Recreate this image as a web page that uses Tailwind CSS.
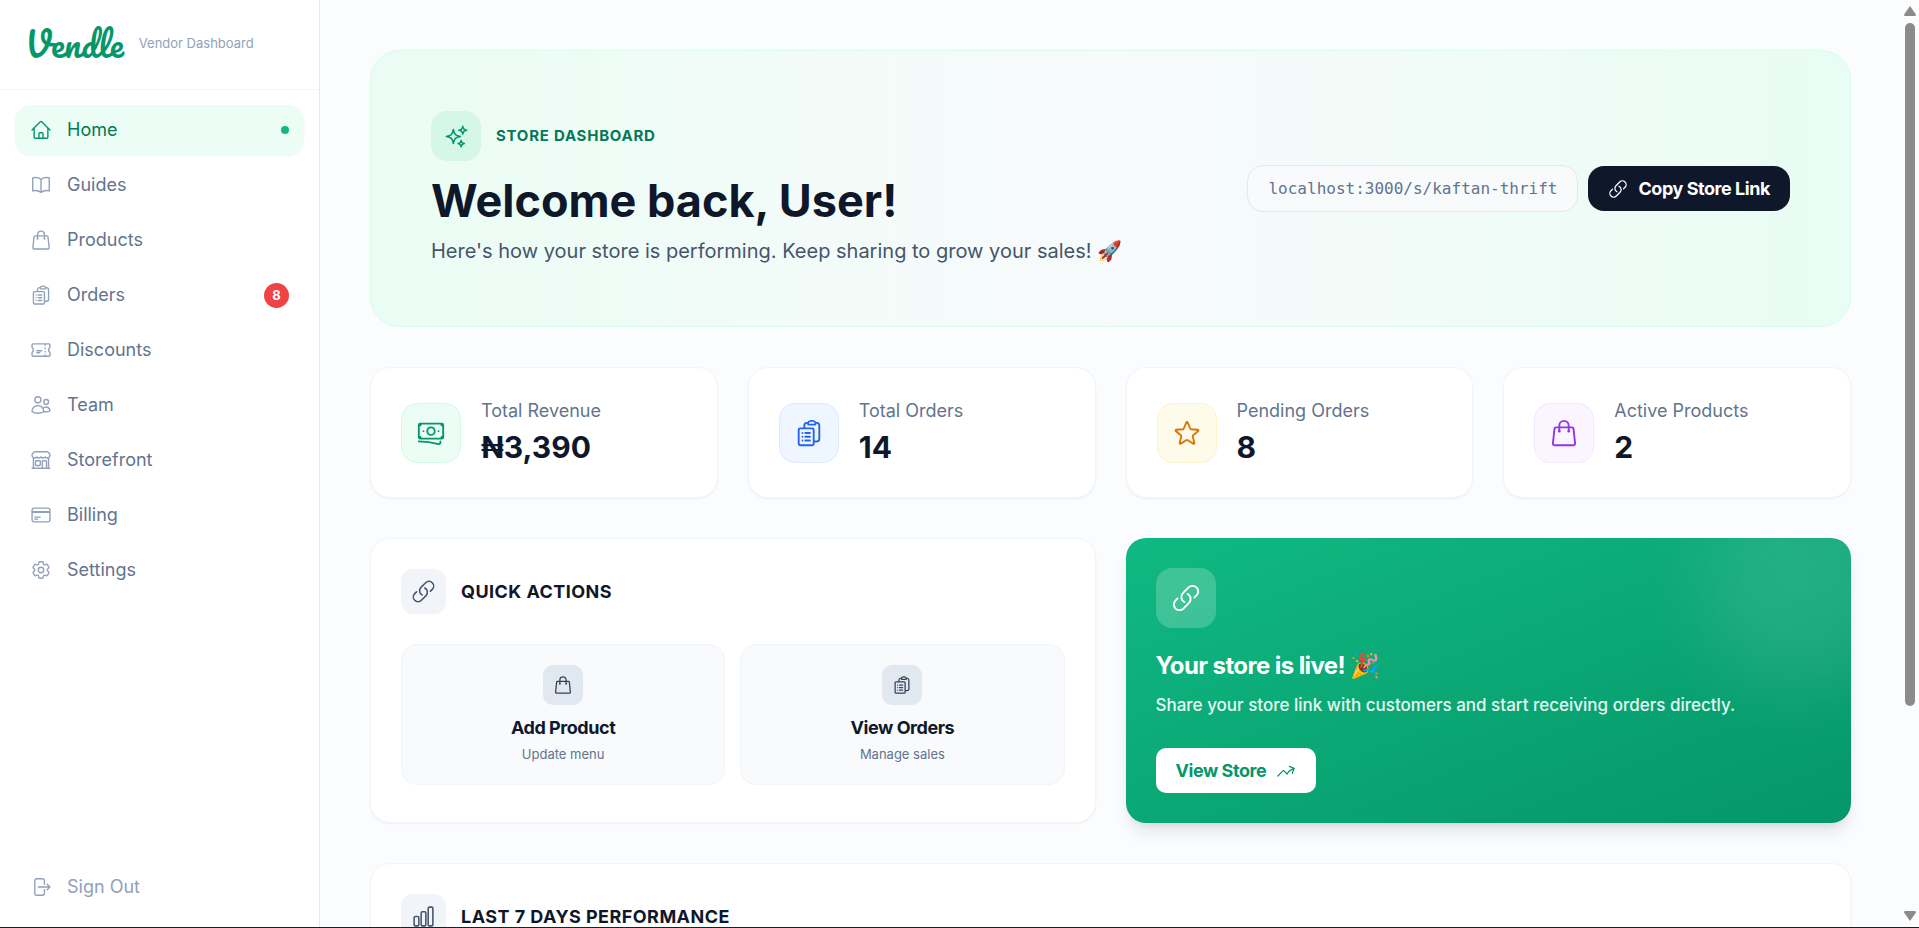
<!DOCTYPE html>
<html lang="en">

<head>
    <meta charset="UTF-8">
    <meta name="viewport" content="width=device-width, initial-scale=1.0">
    <title>Vendle - Vendor Dashboard</title>
    <script src="https://cdn.jsdelivr.net/npm/@tailwindcss/browser@4"></script>
</head>

<body class="flex h-screen overflow-hidden border-b border-[#1b1f2a] bg-[#fbfcfe] font-['Inter',sans-serif] text-slate-900">

    <!-- Icons -->
    <svg class="hidden" fill="none" stroke-linecap="round" stroke-linejoin="round">
        <symbol id="home" viewBox="0 0 24 24"><path d="m2.25 12 8.954-8.955c.44-.439 1.152-.439 1.591 0L21.75 12M4.5 9.75v10.125c0 .621.504 1.125 1.125 1.125H9.75v-4.875c0-.621.504-1.125 1.125-1.125h2.25c.621 0 1.125.504 1.125 1.125V21h4.125c.621 0 1.125-.504 1.125-1.125V9.75M8.25 21h8.25" /></symbol>
        <symbol id="book" viewBox="0 0 24 24"><path d="M12 6.042A8.967 8.967 0 0 0 6 3.75c-1.052 0-2.062.18-3 .512v14.25A8.987 8.987 0 0 1 6 18c2.305 0 4.408.867 6 2.292m0-14.25a8.966 8.966 0 0 1 6-2.292c1.052 0 2.062.18 3 .512v14.25A8.987 8.987 0 0 0 18 18a8.967 8.967 0 0 0-6 2.292m0-14.25v14.25" /></symbol>
        <symbol id="bag" viewBox="0 0 24 24"><path d="M15.75 10.5V6a3.75 3.75 0 1 0-7.5 0v4.5m11.356-1.993 1.263 12c.07.665-.45 1.243-1.119 1.243H4.25a1.125 1.125 0 0 1-1.12-1.243l1.264-12A1.125 1.125 0 0 1 5.513 7.5h12.974c.576 0 1.059.435 1.119 1.007ZM8.625 10.5a.375.375 0 1 1-.75 0 .375.375 0 0 1 .75 0Zm7.5 0a.375.375 0 1 1-.75 0 .375.375 0 0 1 .75 0Z" /></symbol>
        <symbol id="clipboard" viewBox="0 0 24 24"><path d="M9 12h3.75M9 15h3.75M9 18h3.75m3 .75H18a2.25 2.25 0 0 0 2.25-2.25V6.108c0-1.135-.845-2.098-1.976-2.192a48.424 48.424 0 0 0-1.123-.08m-5.801 0c-.065.21-.1.433-.1.664 0 .414.336.75.75.75h4.5a.75.75 0 0 0 .75-.75 2.25 2.25 0 0 0-.1-.664m-5.8 0A2.251 2.251 0 0 1 13.5 2.25H15c1.012 0 1.867.668 2.15 1.586m-5.8 0c-.376.023-.75.05-1.124.08C9.095 4.01 8.25 4.973 8.25 6.108V8.25m0 0H4.875c-.621 0-1.125.504-1.125 1.125v11.25c0 .621.504 1.125 1.125 1.125h9.75c.621 0 1.125-.504 1.125-1.125V9.375c0-.621-.504-1.125-1.125-1.125H8.25ZM6.75 12h.008v.008H6.75V12Zm0 3h.008v.008H6.75V15Zm0 3h.008v.008H6.75V18Z" /></symbol>
        <symbol id="ticket" viewBox="0 0 24 24"><path d="M16.5 6v.75m0 3v.75m0 3v.75m0 3V18m-9-5.25h5.25M7.5 15h3M3.375 5.25c-.621 0-1.125.504-1.125 1.125v3.026a2.999 2.999 0 0 1 0 5.198v3.026c0 .621.504 1.125 1.125 1.125h17.25c.621 0 1.125-.504 1.125-1.125v-3.026a2.999 2.999 0 0 1 0-5.198V6.375c0-.621-.504-1.125-1.125-1.125H3.375Z" /></symbol>
        <symbol id="users" viewBox="0 0 24 24"><path d="M15 19.128a9.38 9.38 0 0 0 2.625.372 9.337 9.337 0 0 0 4.121-.952 4.125 4.125 0 0 0-7.533-2.493M15 19.128v-.003c0-1.113-.285-2.16-.786-3.07M15 19.128v.106A12.318 12.318 0 0 1 8.624 21c-2.331 0-4.512-.645-6.374-1.766l-.001-.109a6.375 6.375 0 0 1 11.964-3.07M12 6.375a3.375 3.375 0 1 1-6.75 0 3.375 3.375 0 0 1 6.75 0Zm8.25 2.25a2.625 2.625 0 1 1-5.25 0 2.625 2.625 0 0 1 5.25 0Z" /></symbol>
        <symbol id="store" viewBox="0 0 24 24"><path d="M13.5 21v-7.5a.75.75 0 0 1 .75-.75h3a.75.75 0 0 1 .75.75V21m-4.5 0H2.36m11.14 0H18m0 0h3.64m-1.39 0V9.349M3.75 21V9.349m0 0a3.001 3.001 0 0 0 3.75-.615A2.993 2.993 0 0 0 9.75 9.75c.896 0 1.7-.393 2.25-1.016a2.993 2.993 0 0 0 2.25 1.016c.896 0 1.7-.393 2.25-1.015a3.001 3.001 0 0 0 3.75.614m-16.5 0a3.004 3.004 0 0 1-.621-4.72l1.189-1.19A1.5 1.5 0 0 1 5.378 3h13.243a1.5 1.5 0 0 1 1.06.44l1.19 1.189a3 3 0 0 1-.621 4.72M6.75 18h3.75a.75.75 0 0 0 .75-.75V13.5a.75.75 0 0 0-.75-.75H6.75a.75.75 0 0 0-.75.75v3.75c0 .414.336.75.75.75Z" /></symbol>
        <symbol id="card" viewBox="0 0 24 24"><path d="M2.25 8.25h19.5M2.25 9h19.5m-16.5 5.25h6m-6 2.25h3m-3.75 3h15a2.25 2.25 0 0 0 2.25-2.25V6.75A2.25 2.25 0 0 0 19.5 4.5h-15a2.25 2.25 0 0 0-2.25 2.25v10.5A2.25 2.25 0 0 0 4.5 19.5Z" /></symbol>
        <symbol id="cog" viewBox="0 0 24 24"><path d="M9.594 3.94c.09-.542.56-.94 1.11-.94h2.593c.55 0 1.02.398 1.11.94l.213 1.281c.063.374.313.686.645.87.074.04.147.083.22.127.325.196.72.257 1.075.124l1.217-.456a1.125 1.125 0 0 1 1.37.49l1.296 2.247a1.125 1.125 0 0 1-.26 1.431l-1.003.827c-.293.241-.438.613-.43.992a7.723 7.723 0 0 1 0 .255c-.008.378.137.75.43.991l1.004.827c.424.35.534.955.26 1.43l-1.298 2.247a1.125 1.125 0 0 1-1.369.491l-1.217-.456c-.355-.133-.75-.072-1.076.124a6.47 6.47 0 0 1-.22.128c-.331.183-.581.495-.644.869l-.213 1.281c-.09.543-.56.94-1.11.94h-2.594c-.55 0-1.019-.398-1.11-.94l-.213-1.281c-.062-.374-.312-.686-.644-.87a6.52 6.52 0 0 1-.22-.127c-.325-.196-.72-.257-1.076-.124l-1.217.456a1.125 1.125 0 0 1-1.369-.49l-1.297-2.247a1.125 1.125 0 0 1 .26-1.431l1.004-.827c.292-.24.437-.613.43-.991a6.932 6.932 0 0 1 0-.255c.007-.38-.138-.751-.43-.992l-1.004-.827a1.125 1.125 0 0 1-.26-1.43l1.297-2.247a1.125 1.125 0 0 1 1.37-.491l1.216.456c.356.133.751.072 1.076-.124.072-.044.146-.086.22-.128.332-.183.582-.495.644-.869l.214-1.28ZM15 12a3 3 0 1 1-6 0 3 3 0 0 1 6 0Z" /></symbol>
        <symbol id="signout" viewBox="0 0 24 24"><path d="M15.75 9V5.25A2.25 2.25 0 0 0 13.5 3h-6a2.25 2.25 0 0 0-2.25 2.25v13.5A2.25 2.25 0 0 0 7.5 21h6a2.25 2.25 0 0 0 2.25-2.25V15m3 0 3-3m0 0-3-3m3 3H9" /></symbol>
        <symbol id="sparkles" viewBox="0 0 24 24"><path d="M9.813 15.904 9 18.75l-.813-2.846a4.5 4.5 0 0 0-3.09-3.09L2.25 12l2.846-.813a4.5 4.5 0 0 0 3.09-3.09L9 5.25l.813 2.846a4.5 4.5 0 0 0 3.09 3.09L15.75 12l-2.846.813a4.5 4.5 0 0 0-3.09 3.09ZM18.259 8.715 18 9.75l-.259-1.035a3.375 3.375 0 0 0-2.455-2.456L14.25 6l1.036-.259a3.375 3.375 0 0 0 2.455-2.456L18 2.25l.259 1.035a3.375 3.375 0 0 0 2.456 2.456L21.75 6l-1.035.259a3.375 3.375 0 0 0-2.456 2.456ZM16.894 20.567 16.5 21.75l-.394-1.183a2.25 2.25 0 0 0-1.423-1.423L13.5 18.75l1.183-.394a2.25 2.25 0 0 0 1.423-1.423l.394-1.183.394 1.183a2.25 2.25 0 0 0 1.423 1.423l1.183.394-1.183.394a2.25 2.25 0 0 0-1.423 1.423Z" /></symbol>
        <symbol id="link" viewBox="0 0 24 24"><path d="M13.19 8.688a4.5 4.5 0 0 1 1.242 7.244l-4.5 4.5a4.5 4.5 0 0 1-6.364-6.364l1.757-1.757m13.35-.622 1.757-1.757a4.5 4.5 0 0 0-6.364-6.364l-4.5 4.5a4.5 4.5 0 0 0 1.242 7.244" /></symbol>
        <symbol id="banknotes" viewBox="0 0 24 24"><path d="M2.25 18.75a60.07 60.07 0 0 1 15.797 2.101c.727.198 1.453-.342 1.453-1.096V18.75M3.75 4.5v.75A.75.75 0 0 1 3 6h-.75m0 0v-.375c0-.621.504-1.125 1.125-1.125H20.25M2.25 6v9m18-10.5v.75c0 .414.336.75.75.75h.75m-1.5-1.5h.375c.621 0 1.125.504 1.125 1.125v9.75c0 .621-.504 1.125-1.125 1.125h-.375m1.5-1.5H21a.75.75 0 0 0-.75.75v.75m0 0H3.75m0 0h-.375a1.125 1.125 0 0 1-1.125-1.125V15m1.5 1.5v-.75A.75.75 0 0 0 3 15h-.75M15 10.5a3 3 0 1 1-6 0 3 3 0 0 1 6 0Zm3 0h.008v.008H18V10.5Zm-12 0h.008v.008H6V10.5Z" /></symbol>
        <symbol id="star" viewBox="0 0 24 24"><path d="M11.48 3.499a.562.562 0 0 1 1.04 0l2.125 5.111a.563.563 0 0 0 .475.345l5.518.442c.499.04.701.663.321.988l-4.204 3.602a.563.563 0 0 0-.182.557l1.285 5.385a.562.562 0 0 1-.84.61l-4.725-2.885a.562.562 0 0 0-.586 0L6.982 20.54a.562.562 0 0 1-.84-.61l1.285-5.386a.562.562 0 0 0-.182-.557l-4.204-3.602a.562.562 0 0 1 .321-.988l5.518-.442a.563.563 0 0 0 .475-.345L11.48 3.5Z" /></symbol>
        <symbol id="trend" viewBox="0 0 24 24"><path d="M2.25 18 9 11.25l4.306 4.306a11.95 11.95 0 0 1 5.814-5.518l2.74-1.22m0 0-5.94-2.281m5.94 2.28-2.28 5.941" /></symbol>
        <symbol id="chart" viewBox="0 0 24 24"><path d="M3 13.125C3 12.504 3.504 12 4.125 12h2.25c.621 0 1.125.504 1.125 1.125v6.75C7.5 20.496 6.996 21 6.375 21h-2.25A1.125 1.125 0 0 1 3 19.875v-6.75ZM9.75 8.625c0-.621.504-1.125 1.125-1.125h2.25c.621 0 1.125.504 1.125 1.125v11.25c0 .621-.504 1.125-1.125 1.125h-2.25a1.125 1.125 0 0 1-1.125-1.125V8.625ZM16.5 4.125c0-.621.504-1.125 1.125-1.125h2.25C20.496 3 21 3.504 21 4.125v15.75c0 .621-.504 1.125-1.125 1.125h-2.25a1.125 1.125 0 0 1-1.125-1.125V4.125Z" /></symbol>
    </svg>

    <!-- Sidebar -->
    <aside class="flex w-80 shrink-0 flex-col border-r border-slate-200 bg-white">
        <div class="flex h-[90px] items-center gap-[15px] border-b border-slate-100 px-[25px] pb-0.5">
            <span class="font-['Pacifico','Liberation_Serif',cursive] text-[34px] leading-10 text-[#059669]">Vendle</span>
            <span class="text-[13px] text-slate-400">Vendor Dashboard</span>
        </div>

        <nav class="flex flex-1 flex-col gap-[5px] p-[15px] text-lg text-slate-500">
            <a href="#" class="flex h-[50px] items-center gap-[15px] rounded-2xl bg-[#ecfdf5] px-[15px] text-[#047857] shadow-xs">
                <svg class="size-[22px] fill-none stroke-[#059669] stroke-[1.5] [stroke-linecap:round] [stroke-linejoin:round]"><use href="#home" /></svg>
                Home
                <span class="ml-auto size-2 rounded-full bg-[#10b981]"></span>
            </a>
            <a href="#" class="flex h-[50px] items-center gap-[15px] rounded-2xl px-[15px]">
                <svg class="size-[22px] fill-none stroke-slate-400 stroke-[1.5] [stroke-linecap:round] [stroke-linejoin:round]"><use href="#book" /></svg>
                Guides
            </a>
            <a href="#" class="flex h-[50px] items-center gap-[15px] rounded-2xl px-[15px]">
                <svg class="size-[22px] fill-none stroke-slate-400 stroke-[1.5] [stroke-linecap:round] [stroke-linejoin:round]"><use href="#bag" /></svg>
                Products
            </a>
            <a href="#" class="flex h-[50px] items-center gap-[15px] rounded-2xl px-[15px]">
                <svg class="size-[22px] fill-none stroke-slate-400 stroke-[1.5] [stroke-linecap:round] [stroke-linejoin:round]"><use href="#clipboard" /></svg>
                Orders
                <span class="ml-auto flex size-[25px] items-center justify-center rounded-full bg-[#ef4444] text-[13px] font-bold text-white">8</span>
            </a>
            <a href="#" class="flex h-[50px] items-center gap-[15px] rounded-2xl px-[15px]">
                <svg class="size-[22px] fill-none stroke-slate-400 stroke-[1.5] [stroke-linecap:round] [stroke-linejoin:round]"><use href="#ticket" /></svg>
                Discounts
            </a>
            <a href="#" class="flex h-[50px] items-center gap-[15px] rounded-2xl px-[15px]">
                <svg class="size-[22px] fill-none stroke-slate-400 stroke-[1.5] [stroke-linecap:round] [stroke-linejoin:round]"><use href="#users" /></svg>
                Team
            </a>
            <a href="#" class="flex h-[50px] items-center gap-[15px] rounded-2xl px-[15px]">
                <svg class="size-[22px] fill-none stroke-slate-400 stroke-[1.5] [stroke-linecap:round] [stroke-linejoin:round]"><use href="#store" /></svg>
                Storefront
            </a>
            <a href="#" class="flex h-[50px] items-center gap-[15px] rounded-2xl px-[15px]">
                <svg class="size-[22px] fill-none stroke-slate-400 stroke-[1.5] [stroke-linecap:round] [stroke-linejoin:round]"><use href="#card" /></svg>
                Billing
            </a>
            <a href="#" class="flex h-[50px] items-center gap-[15px] rounded-2xl px-[15px]">
                <svg class="size-[22px] fill-none stroke-slate-400 stroke-[1.5] [stroke-linecap:round] [stroke-linejoin:round]"><use href="#cog" /></svg>
                Settings
            </a>
        </nav>

        <div class="p-[15px]">
            <button class="flex h-[50px] w-full items-center gap-[15px] rounded-2xl px-[15px] text-lg text-slate-400">
                <svg class="size-[22px] fill-none stroke-slate-400 stroke-[1.5] [stroke-linecap:round] [stroke-linejoin:round]"><use href="#signout" /></svg>
                Sign Out
            </button>
        </div>
    </aside>

    <!-- Main -->
    <main class="flex min-w-0 flex-1 flex-col gap-10 overflow-hidden p-[50px]">

        <!-- Hero -->
        <section class="flex shrink-0 items-center justify-between rounded-[30px] border border-[#d9fbe9] bg-linear-to-r from-[#eafdf4] via-[#f8fafc] to-[#e8fdf3] p-[60px]">
            <div>
                <div class="flex items-center gap-[15px]">
                    <div class="flex size-[50px] items-center justify-center rounded-2xl bg-[#10b981]/10">
                        <svg class="size-[25px] fill-none stroke-[#059669] stroke-[1.5] [stroke-linecap:round] [stroke-linejoin:round]"><use href="#sparkles" /></svg>
                    </div>
                    <span class="text-[15px] font-bold tracking-wider text-[#047857]">STORE DASHBOARD</span>
                </div>
                <h1 class="mt-[15px] text-[45px] leading-[50px] font-bold">Welcome back, User!</h1>
                <p class="mt-[10px] text-xl leading-[30px] text-slate-600">Here's how your store is performing. Keep sharing to grow your sales! 🚀</p>
            </div>
            <div class="flex items-center gap-[10px]">
                <div class="rounded-2xl border border-slate-200 bg-slate-50 px-5 py-[10px] font-['DejaVu_Sans_Mono',monospace] text-base leading-[25px] text-slate-500">localhost:3000/s/kaftan-thrift</div>
                <button class="flex h-[45px] items-center gap-[10px] rounded-2xl bg-slate-900 px-5 text-lg font-bold tracking-tight text-white">
                    <svg class="size-5 fill-none stroke-white stroke-[1.5] [stroke-linecap:round] [stroke-linejoin:round]"><use href="#link" /></svg>
                    Copy Store Link
                </button>
            </div>
        </section>

        <!-- Stats -->
        <section class="grid shrink-0 grid-cols-4 gap-[30px]">
            <div class="flex items-center gap-5 rounded-[20px] border border-slate-100 bg-white p-[30px] shadow-xs">
                <div class="flex size-[60px] items-center justify-center rounded-2xl border border-[#d1fae5] bg-[#ecfdf5]">
                    <svg class="size-[30px] fill-none stroke-[#059669] stroke-[1.5] [stroke-linecap:round] [stroke-linejoin:round]"><use href="#banknotes" /></svg>
                </div>
                <div>
                    <p class="text-lg leading-[25px] text-slate-500">Total Revenue</p>
                    <p class="mt-1 text-3xl leading-10 font-bold">₦3,390</p>
                </div>
            </div>
            <div class="flex items-center gap-5 rounded-[20px] border border-slate-100 bg-white p-[30px] shadow-xs">
                <div class="flex size-[60px] items-center justify-center rounded-2xl border border-[#dbeafe] bg-[#eff6ff]">
                    <svg class="size-[30px] fill-none stroke-[#2563eb] stroke-[1.5] [stroke-linecap:round] [stroke-linejoin:round]"><use href="#clipboard" /></svg>
                </div>
                <div>
                    <p class="text-lg leading-[25px] text-slate-500">Total Orders</p>
                    <p class="mt-1 text-3xl leading-10 font-bold">14</p>
                </div>
            </div>
            <div class="flex items-center gap-5 rounded-[20px] border border-slate-100 bg-white p-[30px] shadow-xs">
                <div class="flex size-[60px] items-center justify-center rounded-2xl border border-[#fef3c7] bg-[#fffbeb]">
                    <svg class="size-[30px] fill-none stroke-[#d97706] stroke-[1.5] [stroke-linecap:round] [stroke-linejoin:round]"><use href="#star" /></svg>
                </div>
                <div>
                    <p class="text-lg leading-[25px] text-slate-500">Pending Orders</p>
                    <p class="mt-1 text-3xl leading-10 font-bold">8</p>
                </div>
            </div>
            <div class="flex items-center gap-5 rounded-[20px] border border-slate-100 bg-white p-[30px] shadow-xs">
                <div class="flex size-[60px] items-center justify-center rounded-2xl border border-[#f3e8ff] bg-[#faf5ff]">
                    <svg class="size-[30px] fill-none stroke-[#9333ea] stroke-[1.5] [stroke-linecap:round] [stroke-linejoin:round]"><use href="#bag" /></svg>
                </div>
                <div>
                    <p class="text-lg leading-[25px] text-slate-500">Active Products</p>
                    <p class="mt-1 text-3xl leading-10 font-bold">2</p>
                </div>
            </div>
        </section>

        <section class="grid shrink-0 grid-cols-2 gap-[30px]">
            <!-- Quick actions -->
            <div class="rounded-[20px] border border-slate-100 bg-white p-[30px] shadow-xs">
                <div class="flex items-center gap-[15px]">
                    <div class="flex size-[45px] items-center justify-center rounded-xl bg-slate-100">
                        <svg class="size-[25px] fill-none stroke-slate-600 stroke-[1.5] [stroke-linecap:round] [stroke-linejoin:round]"><use href="#link" /></svg>
                    </div>
                    <h2 class="text-lg font-bold tracking-wide">QUICK ACTIONS</h2>
                </div>
                <div class="mt-[30px] grid grid-cols-2 gap-[15px]">
                    <button class="flex flex-col items-center rounded-2xl border border-slate-100 bg-slate-50 p-5">
                        <span class="flex size-10 items-center justify-center rounded-[10px] bg-slate-200">
                            <svg class="size-5 fill-none stroke-slate-700 stroke-[1.5] [stroke-linecap:round] [stroke-linejoin:round]"><use href="#bag" /></svg>
                        </span>
                        <span class="mt-[10px] text-lg leading-[25px] font-bold tracking-tight">Add Product</span>
                        <span class="mt-1 text-[13px] leading-5 text-slate-500">Update menu</span>
                    </button>
                    <button class="flex flex-col items-center rounded-2xl border border-slate-100 bg-slate-50 p-5">
                        <span class="flex size-10 items-center justify-center rounded-[10px] bg-slate-200">
                            <svg class="size-5 fill-none stroke-slate-700 stroke-[1.5] [stroke-linecap:round] [stroke-linejoin:round]"><use href="#clipboard" /></svg>
                        </span>
                        <span class="mt-[10px] text-lg leading-[25px] font-bold tracking-tight">View Orders</span>
                        <span class="mt-1 text-[13px] leading-5 text-slate-500">Manage sales</span>
                    </button>
                </div>
            </div>

            <!-- Store status -->
            <div class="relative overflow-hidden rounded-[20px] bg-linear-to-br from-[#10b981] to-[#059669] p-[30px] text-white shadow-[0_12px_18px_-4px_rgb(0_0_0/0.1),0_5px_8px_-5px_rgb(0_0_0/0.1)]">
                <div class="absolute -top-[50px] -right-[50px] size-[200px] rounded-full bg-white/10 blur-[40px]"></div>
                <div class="flex size-[60px] items-center justify-center rounded-2xl bg-white/20">
                    <svg class="size-[30px] fill-none stroke-white stroke-[1.5] [stroke-linecap:round] [stroke-linejoin:round]"><use href="#link" /></svg>
                </div>
                <h2 class="mt-5 text-2xl leading-[35px] font-bold tracking-tight">Your store is live! 🎉</h2>
                <p class="mt-[10px] text-[17px] leading-[25px] font-medium text-white/90">Share your store link with customers and start receiving orders directly.</p>
                <a href="#" class="mt-[30px] inline-flex h-[45px] items-center gap-[10px] rounded-[10px] bg-white px-5 text-lg font-bold tracking-tight text-[#059669]">
                    View Store
                    <svg class="size-5 fill-none stroke-[#059669] stroke-[1.5] [stroke-linecap:round] [stroke-linejoin:round]"><use href="#trend" /></svg>
                </a>
            </div>
        </section>

        <!-- Performance -->
        <section class="h-96 shrink-0 rounded-[20px] border border-slate-100 bg-white p-[30px] shadow-xs">
            <div class="flex items-center gap-[15px]">
                <div class="flex size-[45px] items-center justify-center rounded-xl bg-slate-100">
                    <svg class="size-[25px] fill-none stroke-slate-600 stroke-[1.5] [stroke-linecap:round] [stroke-linejoin:round]"><use href="#chart" /></svg>
                </div>
                <h2 class="text-lg font-bold tracking-wide">LAST 7 DAYS PERFORMANCE</h2>
            </div>
        </section>
    </main>

    <!-- Scrollbar -->
    <div class="flex w-[18px] shrink-0 flex-col items-center justify-between py-[5px]">
        <svg class="h-[11px] w-3 fill-[#8b8b8b]" viewBox="0 0 12 11"><path d="M6 1 12 9.500Q12 11 11 11H1Q0 11 0 9.500Z" /></svg>
        <div class="my-[7px] w-full flex-1">
            <div class="mx-auto h-[77.5%] w-[10px] rounded-full bg-[#8b8b8b]"></div>
        </div>
        <svg class="h-[11px] w-3 fill-[#8b8b8b]" viewBox="0 0 12 11"><path d="M6 10 0 1.500Q0 0 1 0H11Q12 0 12 1.500Z" /></svg>
    </div>
</body>

</html>
